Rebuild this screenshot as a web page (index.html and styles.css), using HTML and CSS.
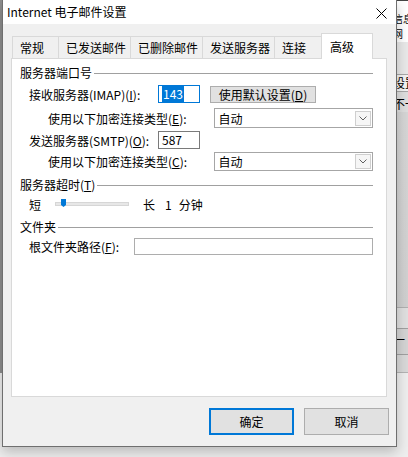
FILE: index.html
```html
<!DOCTYPE html>
<html lang="zh-CN">
<head>
<meta charset="utf-8">
<title>Internet 电子邮件设置</title>
<link rel="stylesheet" href="styles.css">
</head>
<body>
<div class="desk-left"></div>
<div class="desk-right">
  <div class="dr-top"><span class="dr-t">信息</span><span class="dr-t">网</span></div>
  <div class="dr-mid"></div>
  <div class="dr-row"><span>设置</span></div>
  <div class="dr-row2"><span>不一</span></div>
  <div class="dr-fill"></div>
  <div class="dr-line"></div>
  <div class="dr-row3"><span>一</span></div>
</div>

<div class="dialog">
  <div class="titlebar">
    <span class="title">Internet 电子邮件设置</span>
    <svg class="close" width="11" height="11" viewBox="0 0 11 11"><path d="M0.5 0.5 L10.5 10.5 M10.5 0.5 L0.5 10.5" stroke="#000" stroke-width="1" fill="none"/></svg>
  </div>

  <div class="tabs">
    <div class="tab first">常规</div>
    <div class="tab">已发送邮件</div>
    <div class="tab">已删除邮件</div>
    <div class="tab">发送服务器</div>
    <div class="tab">连接</div>
    <div class="tab sel">高级</div>
  </div>

  <div class="panel">
    <div class="grp"><span>服务器端口号</span><span class="rule"></span></div>

    <div class="row r1">
      <span class="lbl-a">接收服务器(IMAP)(<u>I</u>):</span>
      <span class="num focus"><span class="hl">143</span></span>
      <span class="btn-def">使用默认设置(<u>D</u>)</span>
    </div>
    <div class="row r2">
      <span class="lbl-b">使用以下加密连接类型(<u>E</u>):</span>
      <span class="select"><span>自动</span><span class="arrow"><svg width="8" height="5" viewBox="0 0 8 5"><path d="M0.5 0.5 L4 4 L7.5 0.5" stroke="#606060" fill="none"/></svg></span></span>
    </div>
    <div class="row r3">
      <span class="lbl-a">发送服务器(SMTP)(<u>O</u>):</span>
      <span class="num">587</span>
    </div>
    <div class="row r4">
      <span class="lbl-b">使用以下加密连接类型(<u>C</u>):</span>
      <span class="select"><span>自动</span><span class="arrow"><svg width="8" height="5" viewBox="0 0 8 5"><path d="M0.5 0.5 L4 4 L7.5 0.5" stroke="#606060" fill="none"/></svg></span></span>
    </div>

    <div class="grp g2"><span>服务器超时(<u>T</u>)</span><span class="rule"></span></div>
    <div class="row slider-row">
      <span>短</span>
      <span class="track"><span class="thumb"></span></span>
      <span class="long"><span>长</span><span class="n1">1</span><span class="min">分钟</span></span>
    </div>

    <div class="grp g3"><span>文件夹</span><span class="rule"></span></div>
    <div class="row folder">
      <span class="lbl-c">根文件夹路径(<u>F</u>):</span>
      <span class="path"></span>
    </div>
  </div>

  <div class="actions">
    <span class="act primary">确定</span>
    <span class="act">取消</span>
  </div>
</div>
</body>
</html>
```
FILE: styles.css
```css
* { box-sizing: border-box; }
html, body { margin: 0; padding: 0; }
body {
  width: 408px;
  height: 457px;
  overflow: hidden;
  position: relative;
  background: #eeeeee;
  font-family: "Noto Sans CJK SC", "Noto Sans", sans-serif;
  font-size: 12px;
  color: #000;
}
u { text-decoration: underline; text-underline-offset: 1px; }

/* desktop windows behind the dialog */
.desk-left {
  position: absolute; left: 0; top: 0;
  width: 2px; height: 373px;
  background: #8e8e8e;
}
.desk-right {
  position: absolute; left: 396px; top: 0;
  width: 12px; height: 373px;
  background: #d9d9d9;
  overflow: hidden;
  border-bottom: 1px solid #b4b4b4;
  display: flex; flex-direction: column;
}
.desk-right span { display: block; margin-left: -3px; white-space: nowrap; line-height: 14px; height: 14px; overflow: hidden; }
.dr-top {
  height: 42px; background: #fff; border-top: 1px solid #444;
  padding-top: 10px;
}
.dr-top .dr-t { height: 15px; line-height: 15px; font-size: 10px; }
.dr-mid { height: 33px; background: #e9e9e9; border-bottom: 1px solid #a8a8a8; }
.dr-row { height: 17px; background: #f4f4f4; border-bottom: 1px solid #a8a8a8; padding-top: 1px; }
.dr-row2 { height: 20px; padding-top: 5px; background: #dedede; }
.dr-fill { height: 196px; background: linear-gradient(#d6d6d6, #d0d0d0); border-bottom: 1px solid #b0b0b0; }
.dr-line { height: 21px; background: #e0e0e0; border-bottom: 1px solid #a0a0a0; }
.dr-row3 { height: 26px; padding-top: 4px; background: #d4d4d4; border-bottom: 1px solid #a0a0a0; }

/* dialog window */
.dialog {
  position: absolute; left: 2px; top: 0;
  width: 395px; height: 447px;
  border: 1px solid #6f6f6f; border-top: none;
  background: #f0f0f0;
  box-shadow: 0 5px 12px rgba(0,0,0,0.22);
  display: flex; flex-direction: column;
}
.titlebar {
  height: 24px; background: #fff;
  display: flex; align-items: center; justify-content: space-between;
  padding: 0 9px 0 4px;
}
.title { font-size: 12px; line-height: 16px; }
.close { margin-top: 2px; }

.tabs {
  display: flex; align-items: flex-end;
  height: 25px; margin: 9px 0 0 9px;
  position: relative; z-index: 1;
}
.tab {
  height: 22px; min-width: 48px;
  padding: 0 4px 0 7px;
  border: 1px solid #d9d9d9; border-bottom: none;
  margin-left: -1px;
  background: #f0f0f0;
  line-height: 21px; white-space: nowrap;
}
.tab.first { margin-left: 0; min-width: 47px; }
.tab.sel {
  height: 26px; min-width: 52px;
  margin: 0 0 -1px -1px;
  padding: 2px 4px 0 8px;
  background: #fff;
  line-height: 22px;
}

.panel {
  height: 339px;
  margin: 0 9px 0 8px;
  border: 1px solid #d9d9d9;
  background: #fff;
  padding: 6px 13px 0 8px;
  display: flex; flex-direction: column;
}
.grp { display: flex; align-items: center; height: 16px; line-height: 16px; white-space: nowrap; }
.grp .rule { flex: 1; height: 1px; background: #a0a0a0; margin-left: 2px; }
.g2 { margin-top: 6px; }
.g3 { margin-top: 7px; }

.row { display: flex; align-items: center; padding-left: 9px; white-space: nowrap; }
.r1 { margin-top: 4px; height: 18px; }
.r2 { margin-top: 5px; height: 20px; padding-left: 28px; }
.r3 { margin-top: 3px; height: 18px; }
.r4 { margin-top: 3px; height: 19px; padding-left: 28px; }
.lbl-a { width: 129px; }
.lbl-b { width: 167px; }
.lbl-c { width: 105px; }

.num {
  width: 42px; height: 18px;
  border: 1px solid #7a7a7a;
  padding-left: 3px; line-height: 16px;
}
.num.focus { border-color: #0078d7; }
.hl { background: #0078d7; color: #fff; padding: 0 1px; }
.btn-def {
  margin-left: 10px; width: 106px; height: 17px;
  border: 1px solid #adadad; background: #e1e1e1;
  text-align: center; line-height: 15px;
}
.select {
  width: 159px; height: 100%;
  border: 1px solid #a6a6a6;
  display: flex; align-items: center; justify-content: space-between;
  padding: 0 1px 0 3px;
}
.arrow {
  width: 16px; height: 15px;
  border: 1px solid #cfcfcf; background: #f6f6f6;
  display: flex; align-items: center; justify-content: center;
}

.slider-row { margin-top: 3px; height: 16px; }
.track {
  position: relative;
  width: 74px; height: 4px; margin-left: 14px;
  background: #e7e7e7; border: 1px solid #d6d6d6;
}
.thumb {
  position: absolute; left: 5px; top: -4px;
  width: 5px; height: 8px;
  background: #0078d7;
  clip-path: polygon(0 0, 100% 0, 100% 75%, 50% 100%, 0 75%);
}
.long { margin-left: 14px; display: flex; }
.n1 { margin-left: 10px; }
.min { margin-left: 7px; }

.folder { margin-top: 3px; height: 17px; }
.path { width: 239px; height: 17px; border: 1px solid #adadad; }

.actions {
  display: flex; justify-content: flex-end; gap: 10px;
  margin-top: 11px; padding-right: 7px;
}
.act {
  width: 85px; height: 27px;
  border: 1px solid #adadad; background: #e1e1e1;
  display: flex; align-items: center; justify-content: center;
}
.act.primary { border: 2px solid #0078d7; }
```
